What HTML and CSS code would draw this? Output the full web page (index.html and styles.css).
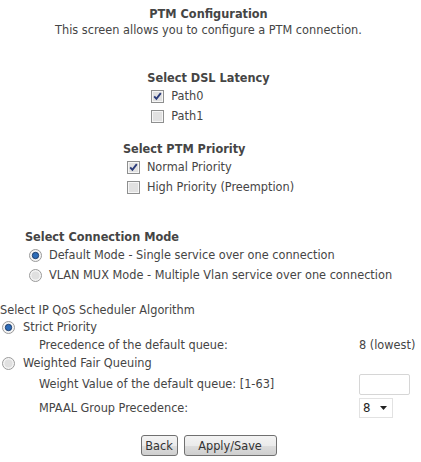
FILE: index.html
```html
<!DOCTYPE html>
<html lang="en">
<head>
  <meta charset="UTF-8" />
  <title>PTM Configuration</title>
  <link rel="stylesheet" href="styles.css">
</head>
<body>
  <form class="page">
    <div class="title">PTM Configuration</div>
    <div class="intro">This screen allows you to configure a PTM connection.</div>

    <!-- DSL latency -->
    <div class="group latency">
      <div class="group-title">Select DSL Latency</div>
      <label class="opt">
        <svg class="box" width="13" height="13" viewBox="0 0 13 13"><rect x="0.5" y="0.5" width="12" height="12" fill="#f6f6f6" stroke="#8e8f8f"/><rect x="2" y="2" width="9" height="9" fill="#e1e1e1"/><path d="M3.2 6.4 L5.4 8.8 L9.8 3.2" fill="none" stroke="#2a3b7a" stroke-width="1.9"/></svg>
        Path0
      </label>
      <label class="opt">
        <svg class="box" width="13" height="13" viewBox="0 0 13 13"><rect x="0.5" y="0.5" width="12" height="12" fill="#f6f6f6" stroke="#8e8f8f"/><rect x="2" y="2" width="9" height="9" fill="#e1e1e1"/></svg>
        Path1
      </label>
    </div>

    <!-- PTM priority -->
    <div class="group priority">
      <div class="group-title">Select PTM Priority</div>
      <label class="opt">
        <svg class="box" width="13" height="13" viewBox="0 0 13 13"><rect x="0.5" y="0.5" width="12" height="12" fill="#f6f6f6" stroke="#8e8f8f"/><rect x="2" y="2" width="9" height="9" fill="#e1e1e1"/><path d="M3.2 6.4 L5.4 8.8 L9.8 3.2" fill="none" stroke="#2a3b7a" stroke-width="1.9"/></svg>
        Normal Priority
      </label>
      <label class="opt">
        <svg class="box" width="13" height="13" viewBox="0 0 13 13"><rect x="0.5" y="0.5" width="12" height="12" fill="#f6f6f6" stroke="#8e8f8f"/><rect x="2" y="2" width="9" height="9" fill="#e1e1e1"/></svg>
        High Priority (Preemption)
      </label>
    </div>

    <!-- Connection mode -->
    <div class="group mode">
      <div class="group-title">Select Connection Mode</div>
      <label class="opt">
        <svg class="box" width="13" height="13" viewBox="0 0 13 13"><circle cx="6.5" cy="6.5" r="6" fill="#f4f4f4" stroke="#9a9a9a"/><circle cx="6.5" cy="6.5" r="3.2" fill="#2d6cb8" stroke="#1a3763" stroke-width="0.9"/></svg>
        Default Mode - Single service over one connection
      </label>
      <label class="opt">
        <svg class="box" width="13" height="13" viewBox="0 0 13 13"><circle cx="6.5" cy="6.5" r="6" fill="#f4f4f4" stroke="#9a9a9a"/><circle cx="6.5" cy="6.5" r="4" fill="#e0e0e0"/></svg>
        VLAN MUX Mode - Multiple Vlan service over one connection
      </label>
    </div>

    <!-- QoS scheduler -->
    <div class="qos">
      <div class="qos-title">Select IP QoS Scheduler Algorithm</div>
      <label class="qos-opt">
        <svg class="box" width="13" height="13" viewBox="0 0 13 13"><circle cx="6.5" cy="6.5" r="6" fill="#f4f4f4" stroke="#9a9a9a"/><circle cx="6.5" cy="6.5" r="3.2" fill="#2d6cb8" stroke="#1a3763" stroke-width="0.9"/></svg>
        Strict Priority
      </label>
      <div class="qos-row">
        <span class="sub">Precedence of the default queue:</span>
        <span class="val">8 (lowest)</span>
      </div>
      <label class="qos-opt wfq">
        <svg class="box" width="13" height="13" viewBox="0 0 13 13"><circle cx="6.5" cy="6.5" r="6" fill="#f4f4f4" stroke="#9a9a9a"/><circle cx="6.5" cy="6.5" r="4" fill="#e0e0e0"/></svg>
        Weighted Fair Queuing
      </label>
      <div class="qos-row weight">
        <span class="sub">Weight Value of the default queue: [1-63]</span>
        <span class="val"><input class="text-in" type="text"></span>
      </div>
      <div class="qos-row mpaal">
        <span class="sub">MPAAL Group Precedence:</span>
        <span class="val">
          <span class="select">8 <svg width="7" height="4" viewBox="0 0 7 4"><path d="M0 0 H7 L3.5 4 Z" fill="#222"/></svg></span>
        </span>
      </div>
    </div>

    <div class="buttons">
      <button type="button" class="btn back">Back</button>
      <button type="button" class="btn save">Apply/Save</button>
    </div>
  </form>
</body>
</html>
```

FILE: styles.css
```css
body {
  margin: 0;
  padding: 0;
  background: #ffffff;
  font-family: 'DejaVu Sans Condensed', 'DejaVu Sans', sans-serif;
  font-size: 12.6px;
  color: #454545;
}
.page {
  width: 417px;
  padding-top: 6px;
  line-height: 16px;
}
.title {
  text-align: center;
  font-weight: bold;
}
.intro {
  text-align: center;
}
.group {
  width: max-content;
  margin: 0 auto;
}
.group-title {
  font-weight: bold;
}
.latency { margin-top: 32px; }
.priority { margin-top: 15px; }
.mode { margin-top: 32px; }
.opt {
  display: flex;
  align-items: center;
  height: 20px;
}
.box {
  flex: none;
  margin-left: 4px;
  margin-right: 7px;
}
.qos {
  margin-top: 17px;
}
.qos-opt {
  display: flex;
  align-items: center;
  height: 18px;
}
.qos-opt .box {
  margin-left: 2px;
  margin-right: 8px;
}
.qos-opt.wfq {
  height: 20px;
}
.qos-row {
  display: flex;
  align-items: center;
  height: 17px;
}
.qos-row.weight { height: 22px; }
.qos-row.mpaal { height: 25px; }
.sub {
  width: 320px;
  padding-left: 39px;
}
.val {
  display: flex;
  align-items: center;
}
.text-in {
  box-sizing: border-box;
  width: 51px;
  height: 21px;
  margin: 0;
  border: 1px solid #d6d6d6;
  border-radius: 2px;
  padding: 0 3px;
  font: inherit;
}
.select {
  box-sizing: border-box;
  width: 34px;
  height: 20px;
  display: flex;
  align-items: center;
  justify-content: space-between;
  padding: 0 5px 0 3px;
  border: 1px solid #e2e2e2;
  color: #222;
  font-size: 13px;
}
.buttons {
  display: flex;
  justify-content: center;
  gap: 6px;
  margin-top: 15px;
}
.btn {
  box-sizing: border-box;
  height: 21px;
  padding: 0;
  border: 1px solid #707070;
  border-radius: 3px;
  background: linear-gradient(#f3f3f3, #ebebeb 50%, #dddddd 50%, #cfcfcf);
  font: inherit;
  color: #333;
  cursor: pointer;
}
.back { width: 37px; }
.save { width: 93px; }
```
